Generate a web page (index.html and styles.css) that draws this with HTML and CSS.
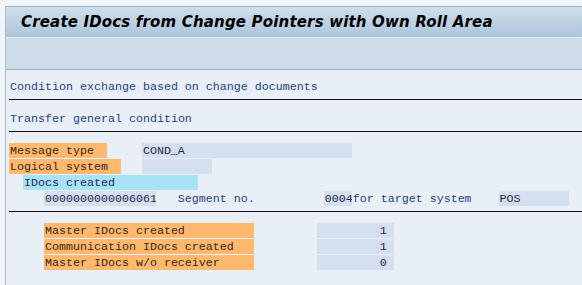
FILE: index.html
```html
<!DOCTYPE html>
<html lang="en">
<head>
<meta charset="UTF-8">
<title>Create IDocs from Change Pointers</title>
<link rel="stylesheet" href="styles.css">
</head>
<body>

<div class="screen">
  <div class="titlebar">
    <h1>Create IDocs from Change Pointers with Own Roll Area</h1>
  </div>
  <div class="toolbar"></div>

  <div class="content">
    <div class="row"><span class="text">Condition exchange based on change documents</span></div>
    <div class="row rule"></div>
    <div class="row"><span class="text">Transfer general condition</span></div>
    <div class="row rule"></div>

    <div class="row">
      <span class="label w14">Message type</span>
      <span class="field ml5 w30">COND_A</span>
    </div>
    <div class="row">
      <span class="label w16">Logical system</span>
      <span class="field ml3 w10"></span>
    </div>
    <div class="row">
      <span class="group ml2 w25">IDocs created</span>
    </div>
    <div class="row">
      <span class="field ml5 w16">0000000000006061</span>
      <span class="text ml3 w11">Segment no.</span>
      <span class="field ml10 w4">0004</span>
      <span class="text w17">for target system</span>
      <span class="field ml4 w10">POS</span>
    </div>
    <div class="row rule"></div>

    <div class="row">
      <span class="label ml5 w30">Master IDocs created</span>
      <span class="field num ml9 w11">1</span>
    </div>
    <div class="row">
      <span class="label ml5 w30">Communication IDocs created</span>
      <span class="field num ml9 w11">1</span>
    </div>
    <div class="row">
      <span class="label ml5 w30">Master IDocs w/o receiver</span>
      <span class="field num ml9 w11">0</span>
    </div>
  </div>
</div>

</body>
</html>
```

FILE: styles.css
```css
body {
  margin: 0;
  background-color: #f1f4f9;
  font-family: "Liberation Mono", monospace;
}

.screen {
  margin: 6px 0 0 5px;
  border-left: 1px solid #a9bbd0;
  height: 279px;
  background-color: #e9eff7;
  overflow: hidden;
}

.titlebar {
  height: 30px;
  border-top: 1px solid #9cb0c8;
  border-bottom: 1px solid #e6edf5;
  background: linear-gradient(#cfdeea, #adc5dc);
}

.titlebar h1 {
  margin: 0;
  padding: 6px 0 0 15px;
  font-family: "DejaVu Sans", sans-serif;
  font-size: 15px;
  font-weight: bold;
  font-style: italic;
  line-height: 18px;
  letter-spacing: 0.17px;
  color: #000;
}

.toolbar {
  height: 31px;
  background-color: #cedce9;
  border-bottom: 1px solid #9bb0c8;
}

.content {
  padding: 9px 0 0 3px;
  font-size: 11.67px;
}

.row {
  display: flex;
  height: 16px;
}

.row > span {
  height: 15px;
  line-height: 17px;
  padding-left: 1px;
  box-sizing: border-box;
  white-space: pre;
  overflow: hidden;
}

.row.rule {
  height: 16px;
  box-sizing: border-box;
  padding-top: 4px;
}

.row.rule::after {
  content: "";
  display: block;
  width: 100%;
  height: 1px;
  background-color: #111;
}

.text {
  color: #1f3f86;
}

.label {
  background-color: #ffb96f;
  color: #3a2616;
}

.group {
  background-color: #a7e3f2;
  color: #1a2c54;
}

.field {
  background-color: #d4e0ef;
  color: #2d1f48;
}

.field.num {
  text-align: right;
  padding-right: 7px;
}

.ml2 { margin-left: 2ch; }
.ml3 { margin-left: 3ch; }
.ml4 { margin-left: 4ch; }
.ml5 { margin-left: 5ch; }
.ml9 { margin-left: 9ch; }
.ml10 { margin-left: 10ch; }

.w4 { width: 4ch; }
.w10 { width: 10ch; }
.w11 { width: 11ch; }
.w14 { width: 14ch; }
.w16 { width: 16ch; }
.w17 { width: 17ch; }
.w25 { width: 25ch; }
.w30 { width: 30ch; }
```
